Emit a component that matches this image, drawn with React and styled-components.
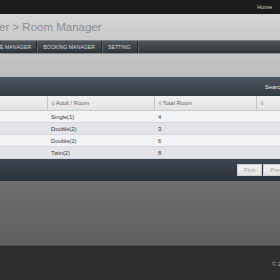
import React from 'react'
import styled, {createGlobalStyle} from 'styled-components'

const GlobalStyle = createGlobalStyle`
  html, body {
    margin: 0;
    padding: 0;
    background: #2e2e2e;
    overflow: hidden;
  }
  body {
    font-family: "Liberation Sans", Arial, sans-serif;
  }
`

const rooms = [
  {adult: 'Single(1)', total: 4},
  {adult: 'Double(2)', total: 3},
  {adult: 'Double(2)', total: 6},
  {adult: 'Twin(2)', total: 8},
]

function App() {
  return (
    <Page>
      <GlobalStyle />
      <TopBar>
        <TopLink>Home</TopLink>
      </TopBar>
      <TitleBar>
        <Title>er &gt; Room Manager</Title>
      </TitleBar>
      <NavBar>
        <NavItem>E MANAGER</NavItem>
        <NavItem>BOOKING MANAGER</NavItem>
        <NavItem>SETTING</NavItem>
      </NavBar>
      <Gap />
      <Panel>
        <PanelHead>
          <SearchLabel>Searc</SearchLabel>
        </PanelHead>
        <Table>
          <colgroup>
            <col style={{width: 47}} />
            <col style={{width: 107}} />
            <col style={{width: 102}} />
            <col style={{width: 60}} />
          </colgroup>
          <thead>
            <tr>
              <Th></Th>
              <Th>◊ Adult / Room</Th>
              <Th>◊ Total Room</Th>
              <Th>◊</Th>
            </tr>
          </thead>
          <tbody>
            {rooms.map((r, i) => (
              <Row key={i} odd={i % 2 === 1}>
                <Td></Td>
                <Td>{r.adult}</Td>
                <Td>{r.total}</Td>
                <Td></Td>
              </Row>
            ))}
          </tbody>
        </Table>
        <PanelFoot>
          <PageBtn>First</PageBtn>
          <PageBtn>Previou</PageBtn>
        </PanelFoot>
      </Panel>
      <GrayArea />
      <Footer>
        <Copy>© 2</Copy>
      </Footer>
    </Page>
  )
}

const Page = styled.div`
  width: 280px;
  height: 280px;
  overflow: hidden;
  display: flex;
  flex-direction: column;
`

const TopBar = styled.div`
  height: 14px;
  background: #1c1c1c;
  display: flex;
  justify-content: flex-end;
  align-items: center;
  padding-right: 8px;
`

const TopLink = styled.span`
  font-size: 5.6px;
  color: #cfcfcf;
`

const TitleBar = styled.div`
  height: 26px;
  background: linear-gradient(#d6d6d6, #c9c9c9);
  display: flex;
  align-items: center;
  overflow: hidden;
  white-space: nowrap;
`

const Title = styled.span`
  font-size: 11.5px;
  color: #8e8e8e;
  margin-left: -1px;
`

const NavBar = styled.div`
  height: 12px;
  background: linear-gradient(#50565b, #2f3438);
  border-top: 1px solid #7c7f82;
  border-bottom: 1px solid #8e8e8e;
  display: flex;
  align-items: center;
  white-space: nowrap;
  overflow: hidden;
`

const NavItem = styled.span`
  font-size: 5.2px;
  color: #d4d6d8;
  padding: 0 6px;
  line-height: 12px;
  border-right: 1px solid #24282b;
  box-shadow: 1px 0 0 #5a6065;
  &:first-child {
    padding-left: 0;
    padding-right: 5px;
  }
`

const Gap = styled.div`
  height: 23px;
  background: linear-gradient(#c6c6c6, #bdbdbd);
`

const Panel = styled.div`
  display: flex;
  flex-direction: column;
`

const PanelHead = styled.div`
  height: 19px;
  background: linear-gradient(#4c5660, #333b44);
  display: flex;
  align-items: center;
  padding-left: 265px;
  white-space: nowrap;
  overflow: hidden;
`

const SearchLabel = styled.span`
  font-size: 5.8px;
  color: #e8e8e8;
`

const Table = styled.table`
  width: 316px;
  border-collapse: collapse;
  table-layout: fixed;
  font-size: 5.8px;
`

const Th = styled.th`
  height: 14px;
  padding: 0 4px;
  text-align: left;
  font-weight: normal;
  color: #6a6a6a;
  background: linear-gradient(#f0f0f0, #e2e2e2);
  border-right: 1px solid #c4c7ca;
  border-bottom: 1px solid #c8cbce;
  white-space: nowrap;
`

const Row = styled.tr`
  background: ${p => (p.odd ? '#e2e4e7' : '#f2f3f4')};
`

const Td = styled.td`
  height: 11px;
  padding: 0 4px;
  color: #3a3a3a;
  border-bottom: 1px solid #d6d8db;
`

const PanelFoot = styled.div`
  height: 22px;
  background: linear-gradient(#3f4753, #2b323b);
  display: flex;
  align-items: center;
  padding-left: 237px;
  gap: 1px;
  white-space: nowrap;
  overflow: hidden;
`

const PageBtn = styled.span`
  height: 12px;
  line-height: 10px;
  padding: 0 6px;
  font-size: 5.8px;
  color: #a4a4a4;
  background: linear-gradient(#f2f2f2, #e2e2e2);
  border: 1px solid #cfcfcf;
  box-sizing: border-box;
`

const GrayArea = styled.div`
  height: 64px;
  background: linear-gradient(#6e6e6e, #5f5f5f);
`

const Footer = styled.div`
  flex: 1;
  background: #2e2e2e;
  border-top: 1px solid #4c4c4c;
  padding: 6px 0 0 272px;
  white-space: nowrap;
  overflow: hidden;
`

const Copy = styled.span`
  font-size: 5.6px;
  color: #bdbdbd;
`

export default App
